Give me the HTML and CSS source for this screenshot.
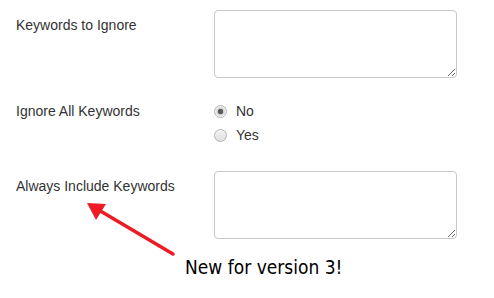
FILE: index.html
```html
<!DOCTYPE html>
<html lang="en">
<head>
    <meta charset="UTF-8">
    <title>Keyword settings</title>
    <link rel="stylesheet" href="styles.css">
</head>
<body>
    <form class="settings">
        <div class="row">
            <label class="row-label" for="ignore">Keywords to Ignore</label>
            <textarea id="ignore" class="box"></textarea>
        </div>

        <div class="row row-radios">
            <span class="row-label">Ignore All Keywords</span>
            <div class="choices">
                <label class="choice"><input type="radio" name="ignoreAll" value="no" checked> No</label>
                <label class="choice"><input type="radio" name="ignoreAll" value="yes"> Yes</label>
            </div>
        </div>

        <div class="row">
            <label class="row-label" for="include">Always Include Keywords</label>
            <textarea id="include" class="box"></textarea>
        </div>

        <p class="note">New for version 3!</p>

        <svg class="arrow" width="494" height="298" viewBox="0 0 494 298">
            <line x1="173" y1="254" x2="97" y2="209" stroke="#ed1c24" stroke-width="3.5" stroke-linecap="round"/>
            <polygon points="87,203 106,204 96,220" fill="#ed1c24"/>
        </svg>
    </form>
</body>
</html>
```

FILE: styles.css
```css
body { margin: 0; background: #fff; font-family: "Liberation Sans", Arial, sans-serif; font-size: 14px; color: #333; }
.settings { position: relative; padding: 10px 0 0 16px; }
.row { display: grid; grid-template-columns: 198px 243px; align-items: start; }
.row-label { padding-top: 5px; line-height: 20px; }
.box { display: block; box-sizing: border-box; width: 243px; height: 68px; margin: 0; padding: 4px 6px; border: 1px solid #c8c8c8; border-radius: 4px; font: inherit; resize: vertical; }
.row-radios { margin: 21px 0 24px; }
.row-radios .row-label { padding-top: 0; line-height: 24px; }
.choices { display: flex; flex-direction: column; }
.choice { display: flex; align-items: center; gap: 9px; line-height: 24px; font-size: 14px; }
.choice input { appearance: none; -webkit-appearance: none; margin: 0; width: 13px; height: 13px; border: 1px solid #b5b5b5; border-radius: 50%; background: linear-gradient(#f4f4f4, #dedede); box-sizing: border-box; }
.choice input:checked { background: radial-gradient(circle, #5a5a5a 0 2.5px, #cfcfcf 3px, #f0f0f0 5px); }
.note { margin: 16px 0 0 169px; font-family: "DejaVu Sans Condensed", "DejaVu Sans", sans-serif; font-stretch: condensed; font-size: 19px; color: #000; line-height: 24px; }
.arrow { position: absolute; left: 0; top: 0; pointer-events: none; }
```
